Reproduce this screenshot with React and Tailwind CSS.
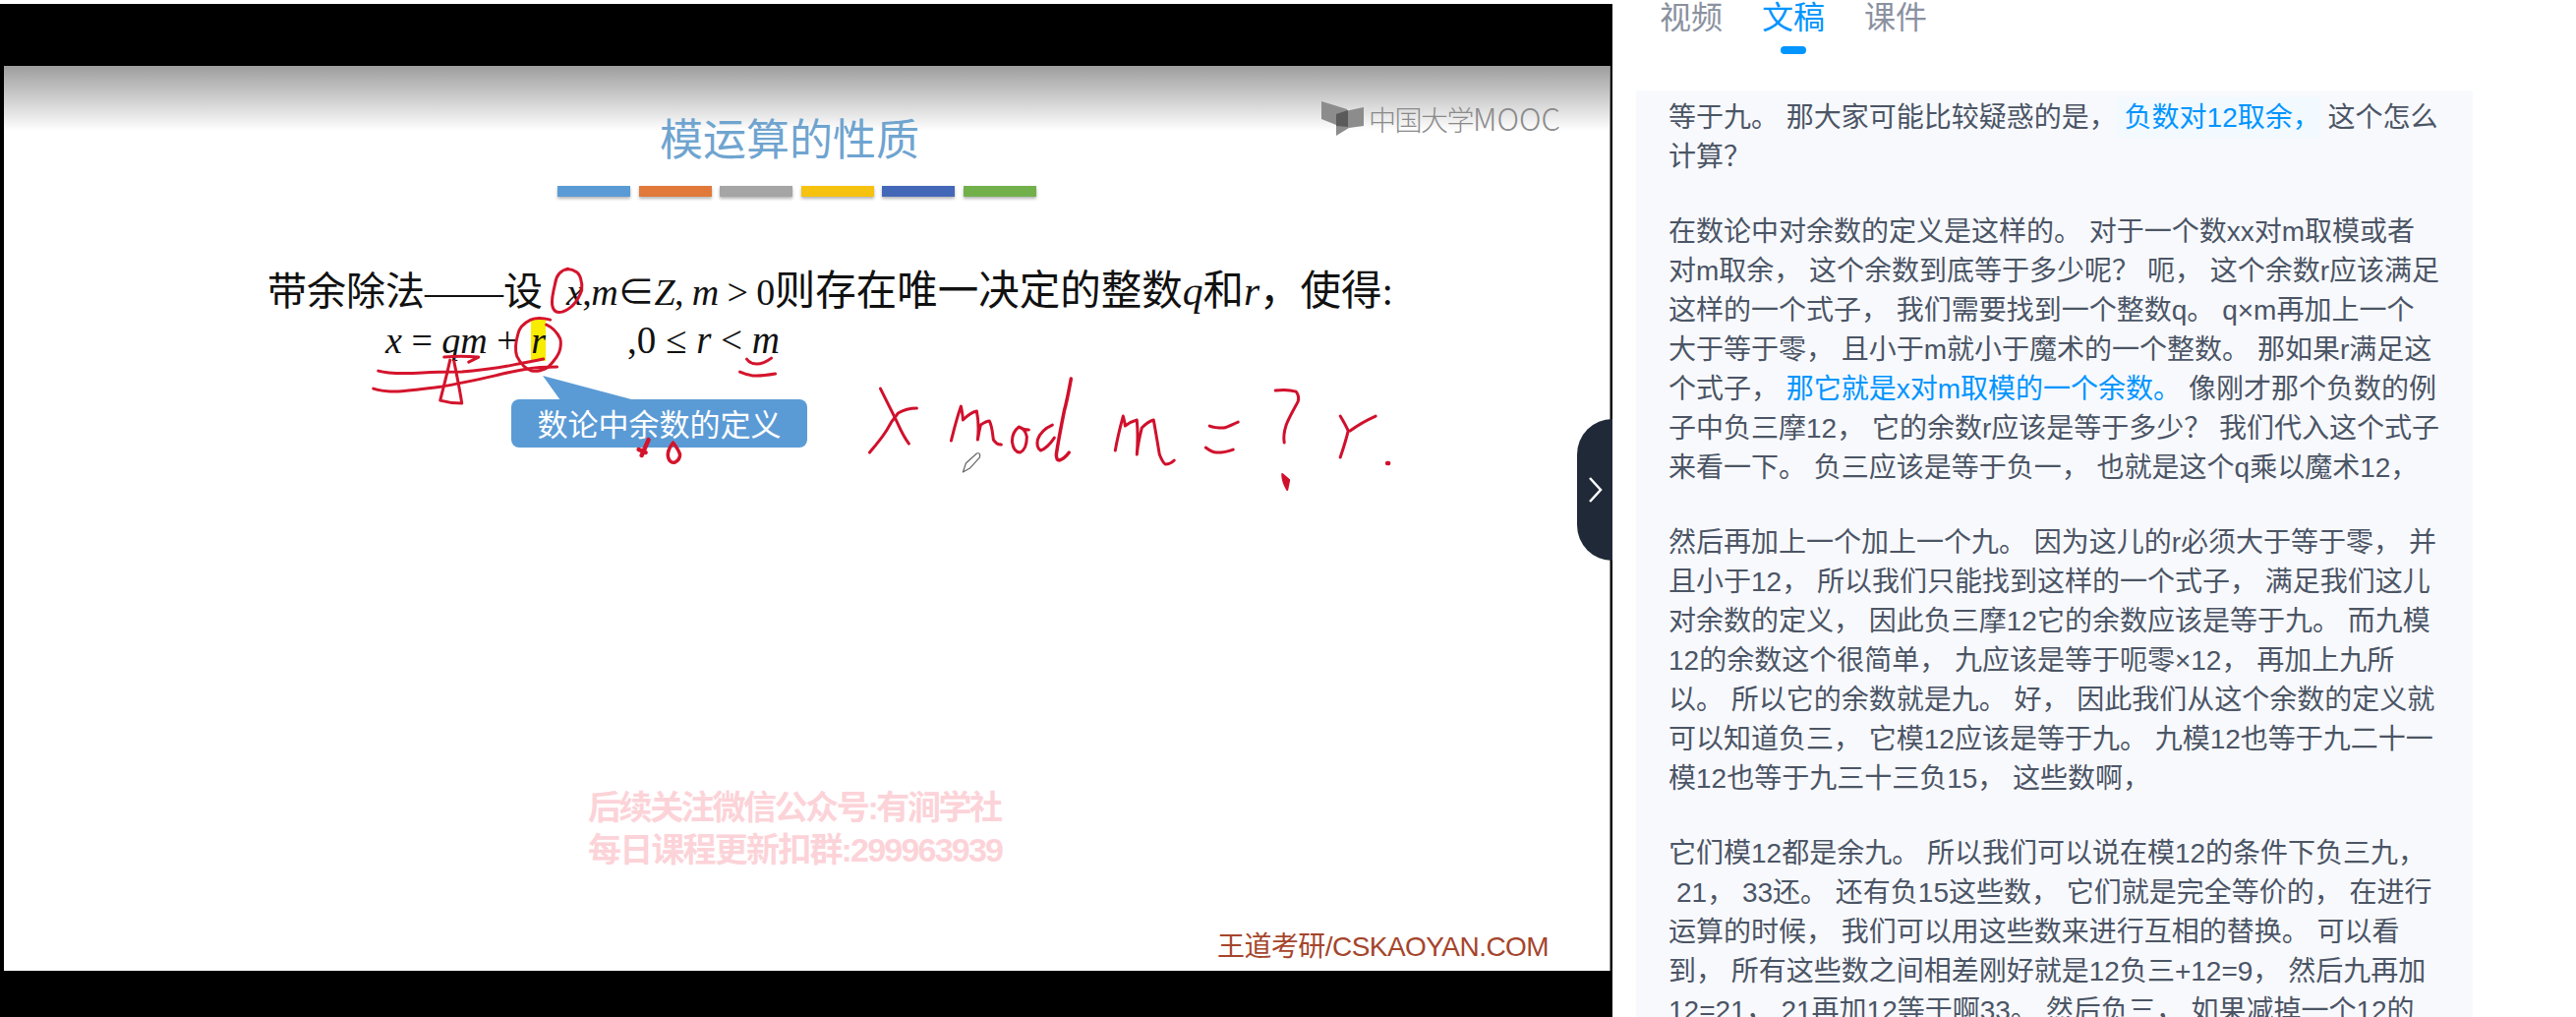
const cn = { fontFamily: '"Noto Sans CJK SC", sans-serif' };
const serif = { fontFamily: '"Liberation Serif", "Noto Sans CJK SC", serif' };
const arial = { fontFamily: '"Liberation Sans", "Noto Sans CJK SC", sans-serif' };

const bars = ['bg-[#5b9bd5]', 'bg-[#e0793a]', 'bg-[#a5a5a5]', 'bg-[#f5c20f]', 'bg-[#4468b8]', 'bg-[#72b04c]'];

const paragraphs = [
  [
    <>等于九。 那大家可能比较疑惑的是，<span className="bg-[#f2f9ff] text-[#0095ff] py-[5px]"> 负数对12取余，</span> 这个怎么</>,
    '计算？',
  ],
  [
    '在数论中对余数的定义是这样的。 对于一个数xx对m取模或者',
    '对m取余， 这个余数到底等于多少呢？ 呃， 这个余数r应该满足',
    '这样的一个式子， 我们需要找到一个整数q。 q×m再加上一个',
    '大于等于零， 且小于m就小于魔术的一个整数。 那如果r满足这',
    <>个式子， <span className="text-[#0095ff]">那它就是x对m取模的一个余数。</span> 像刚才那个负数的例</>,
    '子中负三摩12， 它的余数r应该是等于多少？ 我们代入这个式子',
    '来看一下。 负三应该是等于负一， 也就是这个q乘以魔术12，',
  ],
  [
    '然后再加上一个加上一个九。 因为这儿的r必须大于等于零， 并',
    '且小于12， 所以我们只能找到这样的一个式子， 满足我们这儿',
    '对余数的定义， 因此负三摩12它的余数应该是等于九。 而九模',
    '12的余数这个很简单， 九应该是等于呃零×12， 再加上九所',
    '以。 所以它的余数就是九。 好， 因此我们从这个余数的定义就',
    '可以知道负三， 它模12应该是等于九。 九模12也等于九二十一',
    '模12也等于九三十三负15， 这些数啊，',
  ],
  [
    '它们模12都是余九。 所以我们可以说在模12的条件下负三九，',
    <span className="pl-[8px]">21， 33还。 还有负15这些数， 它们就是完全等价的， 在进行</span>,
    '运算的时候， 我们可以用这些数来进行互相的替换。 可以看',
    '到， 所有这些数之间相差刚好就是12负三+12=9， 然后九再加',
    '12=21， 21再加12等于啊33。 然后负三， 如果减掉一个12的',
  ],
];

// everything the teacher wrote on the slide, in page coordinates
function Handwriting() {
  return (
    <svg className="absolute inset-0 w-full h-full" viewBox="4 67 1634 920" fill="none" stroke="#d4142c" strokeWidth="3" strokeLinecap="round" strokeLinejoin="round">
      <path d="M578 273C570 275 566 280 565 288C563 296 561 304 562 310C563 317 567 318 572 317C581 314 588 306 592 295C593 286 590 278 586 276C583 274 580 273 576 274" />
      <path d="M560 325C552 323 545 323 540 325C532 329 528 334 527 340C525 347 524 356 526 362C530 370 535 375 541 377C547 378 553 376 558 373C564 367 569 361 570 355C571 350 571 347 570 344C567 338 563 333 556 330" />
      <path d="M385 377C395 380 410 380 430 379C445 378 455 378 470 378C490 376 505 374 517 372C530 369 542 367 553 365" />
      <path d="M380 395C388 398 395 398 405 398C420 397 435 395 450 393C470 389 487 386 503 382C515 379 526 377 537 375C547 373 557 373 567 373" />
      <path d="M452 363C462 362 475 362 487 363L477 368M458 366C455 380 451 395 448 407C455 409 463 410 470 410C468 396 465 382 462 367" />
      <path d="M760 365C763 369 766 370 770 370C776 370 781 367 785 364" />
      <path d="M753 378C760 381 765 382 770 382C777 382 783 381 789 380" />
      <path d="M660 447L653 463M650 457L657 460" strokeWidth="4.5" />
      <path d="M685 450C681 455 679 461 680 465C681 469 684 471 687 470C691 468 692 465 692 462C691 458 688 454 685 450" strokeWidth="3.5" />
      <g strokeWidth="3" stroke="#d0102c">
        <path d="M896 395C901 405 906 415 911 425C915 433 918 442 925 451" />
        <path d="M933 415C926 415 919 417 914 420C909 426 905 432 902 438C897 446 891 453 885 460" />
        <path d="M968 448C971 436 974 424 978 413C979 418 980 423 980 427C984 423 989 419 994 418C996 428 996 438 995 447C996 441 997 436 998 432C1001 430 1004 428 1007 428C1010 434 1010 441 1011 447C1013 450 1016 452 1019 452" />
        <path d="M1037 434C1033 437 1030 443 1030 449C1031 456 1034 460 1038 460C1043 458 1045 451 1045 444C1044 439 1041 435 1037 434C1040 436 1043 437 1047 437" />
        <path d="M1071 432C1064 435 1058 441 1056 447C1055 452 1056 456 1059 458C1064 456 1069 451 1073 445" />
        <path d="M1090 385C1088 396 1086 407 1083 418C1080 433 1077 448 1075 462C1075 466 1076 468 1078 468C1082 467 1085 464 1088 460" strokeWidth="3.5" />
        <path d="M1135 458C1137 446 1140 434 1143 423C1144 427 1145 430 1145 433C1149 430 1153 428 1157 427C1158 438 1158 450 1157 462C1158 452 1160 443 1162 435C1166 431 1170 428 1174 427C1176 438 1178 450 1180 462C1182 467 1184 471 1186 472C1190 472 1193 470 1195 468" />
        <path d="M1231 433C1236 435 1240 435 1245 435C1250 434 1255 431 1260 429" />
        <path d="M1227 455C1231 458 1234 460 1238 460C1244 460 1250 459 1255 457" />
        <path d="M1298 397C1305 396 1312 396 1319 398C1322 402 1322 405 1321 408C1317 416 1312 424 1309 432C1307 438 1306 444 1307 450" />
        <path d="M1364 423C1367 428 1370 433 1372 438C1370 447 1367 456 1364 465M1374 438C1382 432 1391 427 1400 423" />
        <path d="M1412 471L1413 471" strokeWidth="4.5" />
      </g>
      <path d="M1305 482L1312 488L1310 498C1307 493 1305 487 1305 482Z" fill="#d0102c" stroke="#d0102c" strokeWidth="2" />
      <path d="M980 480L983 471L994 461C997 460 998 462 997 465L987 476Z" stroke="#666" strokeWidth="1.2" fill="#fff" />
    </svg>
  );
}

function Slide() {
  return (
    <div className="relative flex-1 ml-[4px] mr-[2px] bg-white border-r border-[#888] overflow-hidden">
      <div className="absolute top-0 inset-x-0 h-[66px] bg-gradient-to-b from-[#9e9e9e] to-white" />

      {/* 模运算的性质 */}
      <div className="relative pl-[667px] pt-[42px] text-[44px] leading-[60px] text-[#6fa4cf]" style={cn}>模运算的性质</div>
      <div className="relative flex gap-[8.6px] pl-[563px] mt-[20px]">
        {bars.map((bar, i) => (
          <div key={i} className={`w-[74px] h-[11px] shadow-[0_2px_3px_rgba(0,0,0,0.3)] ${bar}`} />
        ))}
      </div>

      {/* formula */}
      <div className="relative pl-[268px] mt-[71px] text-[40px] leading-[50px] text-[#111] whitespace-nowrap" style={serif}>
        带余除法——设<span className="text-[38px] ml-[24px] tracking-[-0.6px]"><span className="italic">x</span>,<span className="italic">m</span>∈<span className="italic">Z</span>, <span className="italic">m</span> &gt; 0</span><span className="text-[41.5px]">则存在唯一决定的整数<span className="italic">q</span>和<span className="italic">r</span>，使得:</span>
      </div>
      <div className="relative pl-[388px] mt-[1px] text-[38px] leading-[46px] text-[#111] whitespace-nowrap flex" style={serif}>
        <span className="w-[246px]"><span className="italic">x</span> = <span className="italic">qm</span> + <span className="italic bg-[#f8ec00] ml-[4px]">r</span></span>
        <span className="text-[39px]">,0 ≤ <span className="italic">r</span> &lt; <span className="italic">m</span></span>
      </div>

      {/* callout */}
      <div className="absolute left-[516px] top-[339px] w-[301px] h-[49px] rounded-[8px] bg-[#5b9bd5] flex items-center justify-center text-[31px] text-white" style={cn}>
        数论中余数的定义
      </div>
      <svg className="absolute left-[544px] top-[313px]" width="100" height="28" viewBox="0 0 100 28">
        <path d="M4 2L22 27L98 27Z" fill="#5b9bd5" />
      </svg>

      <Handwriting />

      {/* MOOC logo */}
      <div className="absolute left-[1340px] top-[36px] flex items-center gap-[5px]">
        <svg width="43" height="35" viewBox="0 0 43 35">
          <path d="M0 0L26 8V26L15 24L0 18Z" fill="#8c8c8c" />
          <path d="M15 12L43 6V25L28 27L15 35Z" fill="#8c8c8c" />
          <path d="M15 13L27 9V26L15 25Z" fill="#5a5a5a" />
        </svg>
        <span className="text-[28px] leading-[34px] font-light text-[#8a8a8a]" style={cn}><span className="tracking-[-1.5px]">中国大学</span><span className="text-[31px]">MOOC</span></span>
      </div>

      {/* watermark */}
      <div className="absolute left-[594px] top-[733px] text-[34px] leading-[43px] font-bold text-[#fcd3d8] whitespace-nowrap" style={arial}>
        <div className="tracking-[-2.4px]">后续关注微信公众号:有涧学社</div>
        <div className="tracking-[-1.8px]">每日课程更新扣群:299963939</div>
      </div>

      <div className="absolute left-[1234px] top-[880px] text-[28px] leading-[32px] tracking-[-0.55px] text-[#a5452c] whitespace-nowrap" style={arial}>
        王道考研/CSKAOYAN.COM
      </div>
    </div>
  );
}

export default function App() {
  return (
    <div className="relative flex w-full h-[1034px] bg-white overflow-hidden">
      {/* Video */}
      <div className="w-[1640px] flex flex-col">
        <div className="h-[4px] bg-white" />
        <div className="flex-1 flex flex-col bg-black pt-[63px] pb-[47px]">
          <Slide />
        </div>
      </div>

      {/* collapse handle */}
      <div className="absolute left-[1604px] top-[426px] w-[36px] h-[144px] rounded-l-[36px] bg-[#1f2937] flex items-center justify-center">
        <svg width="18" height="26" viewBox="0 0 18 26" fill="none" stroke="#fff" strokeWidth="2.5" className="ml-[2px]">
          <path d="M3 1L14 13L3 25" />
        </svg>
      </div>

      {/* Right panel */}
      <div className="flex-1 flex flex-col min-w-0" style={arial}>
        <div className="h-[92px] flex gap-[40px] pl-[48px]">
          <div className="text-[32px] leading-[36px] text-[#8a919f]">视频</div>
          <div className="flex flex-col items-center">
            <div className="text-[32px] leading-[36px] text-[#0095ff]">文稿</div>
            <div className="mt-[11px] w-[26px] h-[8px] rounded-full bg-[#0095ff]" />
          </div>
          <div className="text-[32px] leading-[36px] text-[#8a919f]">课件</div>
        </div>
        <div className="flex-1 ml-[24px] w-[851px] pl-[33px] pt-[8px] bg-[#f8f9fd] overflow-hidden text-[28px] leading-[40px] text-[#4b5565] whitespace-nowrap">
          {paragraphs.map((lines, i) => (
            <div key={i} className="mb-[36px]">
              {lines.map((line, j) => (
                <div key={j}>{line}</div>
              ))}
            </div>
          ))}
        </div>
      </div>
    </div>
  );
}
